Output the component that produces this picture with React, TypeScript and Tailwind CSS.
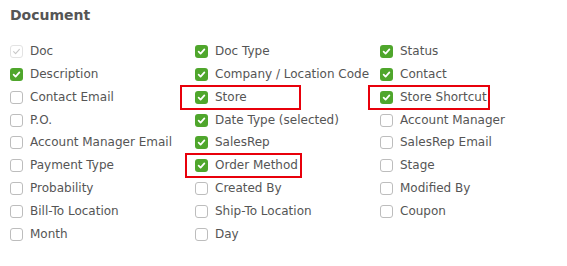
import React from "react";

type Item = { label: string; state: "checked" | "unchecked" | "disabled"; box?: string };

const items: Item[] = [
  { label: "Doc", state: "disabled" },
  { label: "Doc Type", state: "checked" },
  { label: "Status", state: "checked" },
  { label: "Description", state: "checked" },
  { label: "Company / Location Code", state: "checked" },
  { label: "Contact", state: "checked" },
  { label: "Contact Email", state: "unchecked" },
  { label: "Store", state: "checked", box: "store" },
  { label: "Store Shortcut", state: "checked", box: "shortcut" },
  { label: "P.O.", state: "unchecked" },
  { label: "Date Type (selected)", state: "checked" },
  { label: "Account Manager", state: "unchecked" },
  { label: "Account Manager Email", state: "unchecked" },
  { label: "SalesRep", state: "checked" },
  { label: "SalesRep Email", state: "unchecked" },
  { label: "Payment Type", state: "unchecked" },
  { label: "Order Method", state: "checked", box: "order" },
  { label: "Stage", state: "unchecked" },
  { label: "Probability", state: "unchecked" },
  { label: "Created By", state: "unchecked" },
  { label: "Modified By", state: "unchecked" },
  { label: "Bill-To Location", state: "unchecked" },
  { label: "Ship-To Location", state: "unchecked" },
  { label: "Coupon", state: "unchecked" },
  { label: "Month", state: "unchecked" },
  { label: "Day", state: "unchecked" },
];

function Box({ state }: { state: Item["state"] }) {
  if (state === "checked") {
    return (
      <span className="flex h-[13px] w-[13px] shrink-0 items-center justify-center rounded-[3px] bg-[#4fa62c]">
        <svg width="9" height="9" viewBox="0 0 10 10">
          <path d="M1.8 5.2 L4 7.4 L8.2 2.6" fill="none" stroke="#fff" strokeWidth="1.9" strokeLinecap="round" strokeLinejoin="round" />
        </svg>
      </span>
    );
  }
  if (state === "disabled") {
    return (
      <span className="flex h-[13px] w-[13px] shrink-0 items-center justify-center rounded-[3px] border border-[#e3e3e3] bg-white">
        <svg width="9" height="9" viewBox="0 0 10 10">
          <path d="M1.8 5.2 L4 7.4 L8.2 2.6" fill="none" stroke="#c8c8c8" strokeWidth="1.2" strokeLinecap="round" strokeLinejoin="round" />
        </svg>
      </span>
    );
  }
  return <span className="h-[13px] w-[13px] shrink-0 rounded-[3px] border border-[#bdbdbd] bg-white" />;
}

export default function App() {
  return (
    <div className="h-[266px] w-[567px] bg-white pl-[10px] pt-[6px] text-[#555]" style={{ fontFamily: '"DejaVu Sans", Verdana, sans-serif' }}>
      <h2 className="text-[14px] font-bold leading-[18px] text-[#555]">Document</h2>
      <div className="mt-[20px] grid grid-cols-[185px_185px_185px] gap-y-[7.85px]">
        {items.map((it) => (
          <div key={it.label} className="relative flex h-[15px] items-center gap-[7px] text-[12px] leading-[15px]">
            <Box state={it.state} />
            <span className="whitespace-nowrap">{it.label}</span>
            {it.box === "store" && (
              <span className="pointer-events-none absolute left-[-15px] top-[-5px] h-[25px] w-[121px] border-2 border-[#e8000b]" />
            )}
            {it.box === "shortcut" && (
              <span className="pointer-events-none absolute left-[-12px] top-[-5px] h-[25px] w-[122px] border-2 border-[#e8000b]" />
            )}
            {it.box === "order" && (
              <span className="pointer-events-none absolute left-[-10px] top-[-5px] h-[25px] w-[117px] border-2 border-[#e8000b]" />
            )}
          </div>
        ))}
      </div>
    </div>
  );
}
